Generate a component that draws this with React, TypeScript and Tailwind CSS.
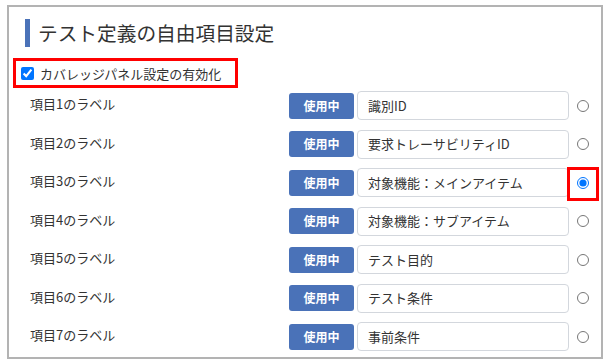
import { useState } from 'react'

type Field = {
  label: string
  value: string
}

const fields: Field[] = [
  { label: '項目1のラベル', value: '識別ID' },
  { label: '項目2のラベル', value: '要求トレーサビリティID' },
  { label: '項目3のラベル', value: '対象機能：メインアイテム' },
  { label: '項目4のラベル', value: '対象機能：サブアイテム' },
  { label: '項目5のラベル', value: 'テスト目的' },
  { label: '項目6のラベル', value: 'テスト条件' },
  { label: '項目7のラベル', value: '事前条件' },
]

export default function App() {
  const [enabled, setEnabled] = useState(true)
  const [selected, setSelected] = useState(2)

  return (
    <div
      className="h-[364px] w-[607px] bg-white pl-[7px] pt-[5px] text-[#333]"
      style={{ fontFamily: '"Noto Sans CJK JP", "Noto Sans", sans-serif' }}
    >
      <div className="h-[354px] w-[596px] border-2 border-[#b3b3b3]">
        <div className="ml-[16px] mt-[12px] flex h-[28px] items-center">
          <div className="h-full w-[5px] bg-[#4a72b8]" />
          <h2 className="ml-[8px] text-[19.7px] leading-none text-[#333]">テスト定義の自由項目設定</h2>
        </div>

        <label className="ml-[4px] mt-[11px] flex h-[30px] w-[225px] items-center border-[3px] border-[#ff0000] pl-[5px]">
          <input
            checked={enabled}
            className="m-0 h-[13px] w-[13px]"
            onChange={(event) => setEnabled(event.target.checked)}
            type="checkbox"
          />
          <span className="ml-[6px] text-[13px] leading-none">カバレッジパネル設定の有効化</span>
        </label>

        <div className="mt-[3px] flex flex-col gap-[9.5px]">
          {fields.map((field, index) => (
            <div className="flex h-[29px] items-center" key={field.label}>
              <div className="w-[280px] pb-[4px] pl-[21px] text-[13px] leading-none">{field.label}</div>
              <button
                className="h-[26px] w-[65px] rounded-[3px] bg-[#4a72b8] text-[12px] font-bold text-white"
                type="button"
              >
                使用中
              </button>
              <div className="ml-[3px] flex h-[29px] w-[212px] items-center rounded-[4px] border border-[#d3d7dd] pl-[10px] text-[13px]">
                {field.value}
              </div>
              <div className="relative -ml-[2px] flex h-[29px] w-[32px] items-center justify-center">
                {index === 2 ? (
                  <div className="absolute -top-[1px] left-0 h-[34px] w-[32px] border-[3px] border-[#ff0000]" />
                ) : null}
                <input
                  checked={selected === index}
                  className="relative m-0 h-[12px] w-[12px]"
                  name="coverage"
                  onChange={() => setSelected(index)}
                  type="radio"
                />
              </div>
            </div>
          ))}
        </div>
      </div>
    </div>
  )
}
